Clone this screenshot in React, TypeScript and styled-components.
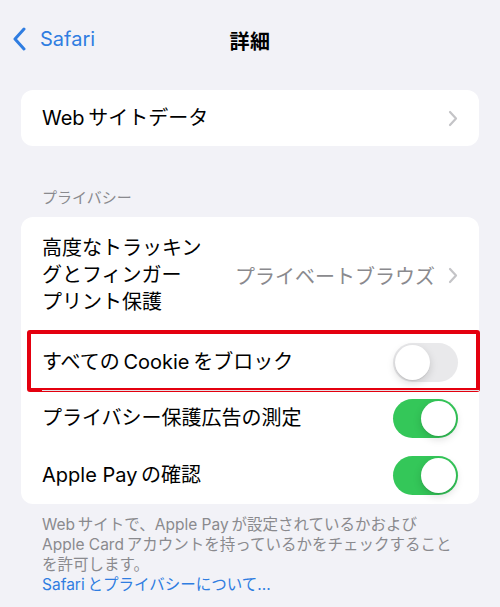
import React from 'react';
import styled, { createGlobalStyle } from 'styled-components';

const GlobalStyle = createGlobalStyle`
    html, body {
        margin: 0;
        padding: 0;
        background: #f2f2f7;
    }
    body {
        font-family: Inter, "Noto Sans CJK JP", sans-serif;
        color: #000000;
        -webkit-font-smoothing: antialiased;
    }
`;

const Page = styled.div`
    width: 500px;
    min-height: 607px;
    background: #f2f2f7;
`;

const NavBar = styled.header`
    position: relative;
    height: 80px;
    display: flex;
    align-items: center;
    justify-content: center;
`;

const BackButton = styled.button`
    position: absolute;
    left: 12px;
    top: 27px;
    display: flex;
    align-items: center;
    gap: 13px;
    padding: 0;
    border: none;
    background: transparent;
    color: #2f7de1;
    font-family: inherit;
    font-size: 20px;
    cursor: pointer;
`;

const Title = styled.h1`
    margin: 0;
    font-size: 20px;
    font-weight: 600;
    letter-spacing: 0.5px;
`;

const Content = styled.main`
    padding: 10px 21px 0;
`;

const Card = styled.section`
    background: #ffffff;
    border-radius: 12px;
`;

const Row = styled.div<{ $padY?: number; $minH?: number }>`
    position: relative;
    display: flex;
    align-items: center;
    min-height: ${({ $minH }) => $minH ?? 56}px;
    padding: ${({ $padY }) => $padY ?? 0}px 21px;
    box-sizing: border-box;

    & + &::before {
        content: '';
        position: absolute;
        top: 0;
        left: 21px;
        right: 0;
        height: 1px;
        background: #e3e3e6;
    }
`;

const Label = styled.span<{ $width?: number }>`
    font-size: 20px;
    line-height: 27px;
    ${({ $width }) => ($width ? `width: ${$width}px;` : '')}
    flex-shrink: 0;
`;

const Value = styled.span`
    margin-left: auto;
    font-size: 20px;
    color: #8a8a8e;
`;

const Chevron = styled.svg`
    margin-left: 13px;
    flex-shrink: 0;
`;

const Highlight = styled.div`
    position: absolute;
    left: 6px;
    right: -1px;
    top: -4px;
    bottom: -2px;
    border: 4px solid #e4000f;
    border-radius: 3px;
    pointer-events: none;
`;

const SectionHeader = styled.div`
    padding: 42px 21px 9px;
    font-size: 15px;
    line-height: 20px;
    color: #8a8a8e;
`;

const Footer = styled.div`
    padding: 11px 8px 0 21px;
    font-size: 15.5px;
    line-height: 20px;
    color: #8a8a8e;
`;

const FooterLine = styled.span`
    display: block;
    white-space: nowrap;
`;

const FooterLink = styled.a`
    display: block;
    color: #2f7de1;
    text-decoration: none;
`;

const Track = styled.div<{ $on: boolean }>`
    position: relative;
    margin-left: auto;
    width: 65px;
    height: 39px;
    border-radius: 20px;
    background: ${({ $on }) => ($on ? '#34c759' : '#e9e9eb')};
    flex-shrink: 0;
`;

const Knob = styled.div<{ $on: boolean }>`
    position: absolute;
    top: 2px;
    left: ${({ $on }) => ($on ? '28px' : '2px')};
    width: 35px;
    height: 35px;
    border-radius: 50%;
    background: #ffffff;
    box-shadow: 0 3px 8px rgba(0, 0, 0, 0.15), 0 1px 1px rgba(0, 0, 0, 0.08);
`;

const Toggle: React.FC<{ on: boolean }> = ({ on }) => (
    <Track $on={on}>
        <Knob $on={on} />
    </Track>
);

const Disclosure = () => (
    <Chevron width="10" height="17" viewBox="0 0 10 17">
        <path
            d="M2 2 L8 8.5 L2 15"
            fill="none"
            stroke="#c4c4c7"
            strokeWidth="2.2"
            strokeLinecap="round"
            strokeLinejoin="round"
        />
    </Chevron>
);

// iOS puts a narrow gap between latin and kana
const g = '\u2009';

const App: React.FC = () => {
    return (
        <Page>
            <GlobalStyle />
            <NavBar>
                <BackButton>
                    <svg width="15" height="24" viewBox="0 0 15 24">
                        <path
                            d="M12 2 L3 12 L12 22"
                            fill="none"
                            stroke="#2f7de1"
                            strokeWidth="3"
                            strokeLinecap="round"
                            strokeLinejoin="round"
                        />
                    </svg>
                    Safari
                </BackButton>
                <Title>詳細</Title>
            </NavBar>
            <Content>
                <Card>
                    <Row>
                        <Label>Web{g}サイトデータ</Label>
                        <Value />
                        <Disclosure />
                    </Row>
                </Card>
                <SectionHeader>プライバシー</SectionHeader>
                <Card>
                    <Row $padY={18}>
                        <Label $width={170}>
                            高度なトラッキン
                            <br />
                            グとフィンガー
                            <br />
                            プリント保護
                        </Label>
                        <Value>プライベートブラウズ</Value>
                        <Disclosure />
                    </Row>
                    <Row>
                        <Label>すべての{g}Cookie{g}をブロック</Label>
                        <Toggle on={false} />
                        <Highlight />
                    </Row>
                    <Row>
                        <Label>プライバシー保護広告の測定</Label>
                        <Toggle on />
                    </Row>
                    <Row $minH={58}>
                        <Label>Apple Pay{g}の確認</Label>
                        <Toggle on />
                    </Row>
                </Card>
                <Footer>
                    <FooterLine>Web{g}サイトで、Apple Pay{g}が設定されているかおよび</FooterLine>
                    <FooterLine>Apple Card{g}アカウントを持っているかをチェックすること</FooterLine>
                    <FooterLine>を許可します。</FooterLine>
                    <FooterLink href="#">Safari{g}とプライバシーについて...</FooterLink>
                </Footer>
            </Content>
        </Page>
    );
};

export default App;
